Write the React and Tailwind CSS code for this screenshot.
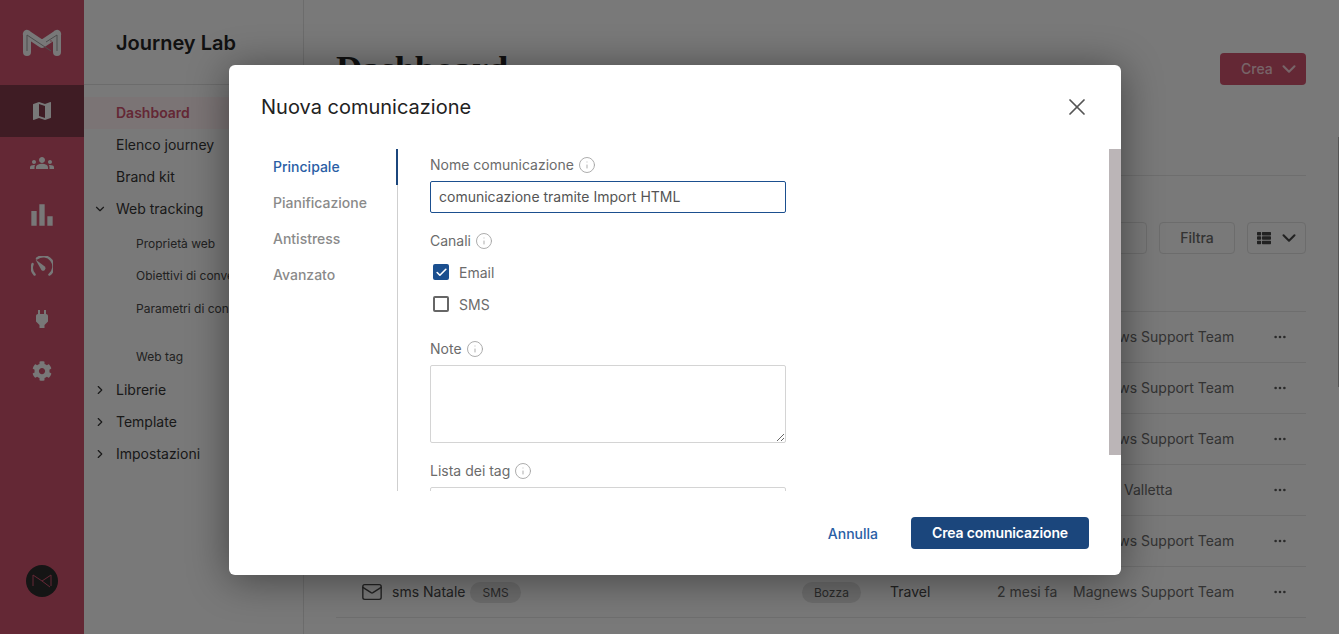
import React from "react";
import { ChevronDown, ChevronRight, Info, Mail, X, Check } from "lucide-react";
import { BsThreeDots } from "react-icons/bs";
import { FaCog, FaThList } from "react-icons/fa";
import { MdBarChart, MdGroups, MdMap, MdPower } from "react-icons/md";

const rows = [
  { author: "Magnews Support Team" },
  { author: "Magnews Support Team" },
  { author: "Magnews Support Team" },
  { author: "Valletta", offset: true },
  { author: "Magnews Support Team" },
  { name: "sms Natale", tag: "SMS", status: "Bozza", brand: "Travel", date: "2 mesi fa", author: "Magnews Support Team" },
];

function Logo() {
  return (
    <svg width="40" height="28" viewBox="0 0 40 28" fill="none">
      <path d="M5 5 L5 23 M5 5 L20 15 L35 5 M35 5 L35 23" stroke="#f0f0f0" strokeWidth="8" strokeLinecap="round" strokeLinejoin="round" />
      <path d="M5 6 L5 22 M5 6 L20 16 M35 6 L35 22 M35 6 L24 13 M20 16 L29 22" stroke="#999" strokeWidth="1" />
      <circle cx="29" cy="12" r="0.7" fill="#c9506b" />
    </svg>
  );
}

function Gauge() {
  return (
    <svg width="22" height="22" viewBox="0 0 22 22" fill="none">
      <path d="M3.6 18.6 A10 10 0 0 1 1.6 8" stroke="#f0f0f0" strokeWidth="2.4" strokeLinecap="round" />
      <path d="M6 2.4 A10 10 0 1 1 18.4 18.6" stroke="#f0f0f0" strokeWidth="2.4" strokeLinecap="round" />
      <path d="M4.5 3.5 L13.8 10.6 A2.4 2.4 0 0 1 10.4 14 Z" fill="#f0f0f0" />
    </svg>
  );
}

function Rail() {
  const color = "text-[#f0f0f0]";
  const icons = [
    <MdGroups size={24} className={color} />,
    <MdBarChart size={32} className={color} />,
    <Gauge />,
    <MdPower size={24} className={color} />,
    <FaCog size={20} className={color} />,
  ];
  return (
    <aside className="flex w-[84px] shrink-0 flex-col items-center bg-[#c9506b]">
      <div className="flex h-[85px] w-full items-center justify-center">
        <Logo />
      </div>
      <div className="flex h-[52px] w-full items-center justify-center bg-[#7e3848]">
        <MdMap size={24} className={color} />
      </div>
      {icons.map((icon, i) => (
        <div key={i} className="flex h-[52px] w-full items-center justify-center">
          {icon}
        </div>
      ))}
      <div className="mt-auto mb-[37px] flex size-8 items-center justify-center rounded-full bg-[#2a2a2a]">
        <svg width="22" height="16" viewBox="0 0 22 16" fill="none">
          <path d="M2 13 L2 2 L11 8 L20 2 L20 13 M11 8 L19 14" stroke="#c9506b" strokeWidth="1" />
        </svg>
      </div>
    </aside>
  );
}

function Sidebar() {
  const top = "flex h-8 items-center pl-[32px] text-sm text-[#333]";
  const sub = "flex h-8 items-center pl-[52px] text-xs text-[#444]";
  return (
    <aside className="w-[220px] shrink-0 border-r border-[#d8d8d8]">
      <div className="flex h-[85px] items-center border-b border-[#d8d8d8] pl-[32px] pt-[2px] text-xl font-semibold text-[#222]">
        Journey Lab
      </div>
      <nav className="pt-3">
        <div className="flex h-8 items-center bg-[#f6e8eb] pl-[32px] text-sm font-semibold text-[#c9506b]">Dashboard</div>
        <div className={top}>Elenco journey</div>
        <div className={top}>Brand kit</div>
        <div className="relative">
          <ChevronDown size={14} strokeWidth={2} className="absolute left-[9px] top-[9px] text-[#333]" />
          <div className={top}>Web tracking</div>
        </div>
        <div className="mt-[3px]">
          <div className={sub}>Proprietà web</div>
          <div className={sub}>Obiettivi di conversione</div>
          <div className={`${sub} h-[33px]`}>Parametri di conversione</div>
          <div className={`${sub} mt-4`}>Web tag</div>
        </div>
        <div className="mt-[1px]">
          {["Librerie", "Template", "Impostazioni"].map((t) => (
            <div key={t} className="relative">
              <ChevronRight size={14} strokeWidth={2} className="absolute left-[9px] top-[9px] text-[#333]" />
              <div className={top}>{t}</div>
            </div>
          ))}
        </div>
      </nav>
    </aside>
  );
}

function Pill({ children }) {
  return <span className="rounded-full bg-[#d8d8d8] px-3 py-[3px] text-xs text-[#555]">{children}</span>;
}

function Main() {
  return (
    <main className="flex min-w-0 flex-1 flex-col pl-[32px] pr-[33px]">
      <div className="flex h-[137px] shrink-0 items-start justify-between pt-[53px]">
        <h1 className="text-[36.5px] leading-[32px] font-bold text-[#222]" style={{ fontFamily: '"Liberation Serif", serif' }}>Dashboard</h1>
        <button className="flex h-8 w-[86px] items-center gap-[5px] rounded bg-[#c9506b] pl-[21px] text-sm font-medium text-white/70">
          Crea <ChevronDown size={22} strokeWidth={2.25} />
        </button>
      </div>
      <div className="h-[39px] shrink-0 border-b border-[#dcdcdc]" />
      <div className="flex h-[136px] shrink-0 items-start justify-end gap-3 border-b border-[#dcdcdc] pt-[46px]">
        <div className="h-8 w-[160px] rounded border border-[#d8d8d8]" />
        <button className="flex h-8 w-[76px] items-center justify-center rounded border border-[#d8d8d8] text-sm font-medium text-[#666]">Filtra</button>
        <button className="flex h-8 w-[59px] items-center gap-[7px] rounded border border-[#d8d8d8] pl-[9px] text-[#444]">
          <FaThList size={14} />
          <ChevronDown size={22} strokeWidth={2.25} />
        </button>
      </div>
      {rows.map((r, i) => (
        <div key={i} className="flex h-[51px] shrink-0 items-center border-b border-[#dcdcdc] text-sm text-[#666]">
          <div className="flex w-[466px] items-center gap-[9px] pl-[25px]">
            {r.name && (
              <>
                <Mail size={22} strokeWidth={1.5} className="text-[#444]" />
                <span className="text-[#444]">{r.name}</span>
                <span className="-ml-[4px]"><Pill>{r.tag}</Pill></span>
              </>
            )}
          </div>
          <div className="w-[88px]">{r.status && <Pill>{r.status}</Pill>}</div>
          <div className="w-[107px] text-[#444]">{r.brand}</div>
          <div className="w-[76px]">{r.date}</div>
          <div className={`w-[200px] ${r.offset ? "pl-[51px]" : ""}`}>{r.author}</div>
          <BsThreeDots size={14} className="text-[#555]" />
        </div>
      ))}
      <div className="flex h-[51px] shrink-0 items-center">
        <div className="w-[134px] shrink-0" />
        <div className="h-5 w-[50px] shrink-0 rounded-full bg-[#d8d8d8]" />
        <div className="w-[282px] shrink-0" />
        <div className="h-5 w-[60px] shrink-0 rounded-full bg-[#d8d8d8]" />
      </div>
    </main>
  );
}

function Label({ children }) {
  return (
    <div className="flex h-4 items-center gap-[4px] text-sm text-[#6b6b6b]">
      {children}
      <Info size={18} strokeWidth={1.25} className="text-[#a8a8a8]" />
    </div>
  );
}

function Modal() {
  return (
    <div className="absolute left-[229px] top-[65px] flex h-[510px] w-[892px] flex-col rounded-md bg-white shadow-[0_4px_40px_rgba(0,0,0,0.45)]">
      <div className="flex h-[84px] shrink-0 items-center justify-between pl-8 pr-[30px]">
        <h2 className="text-xl text-[#222]">Nuova comunicazione</h2>
        <X size={28} strokeWidth={1.5} className="text-[#555]" />
      </div>
      <div className="flex h-[342px] shrink-0">
        <div className="relative w-[169px] shrink-0 border-r border-[#cfcfcf] pl-[44px] text-sm font-medium text-[#8a8a8a]">
          <div className="absolute -right-px top-0 h-9 w-[2px] bg-[#1b467c]" />
          <div className="flex h-9 items-center text-[#2a5ea5]">Principale</div>
          <div className="flex h-9 items-center">Pianificazione</div>
          <div className="flex h-9 items-center">Antistress</div>
          <div className="flex h-9 items-center">Avanzato</div>
        </div>
        <div className="min-w-0 flex-1 overflow-hidden pl-8 pt-2">
          <Label>Nome comunicazione</Label>
          <input
            readOnly
            value="comunicazione tramite Import HTML"
            className="mt-2 h-8 w-[356px] rounded-[2px] border border-[#1b4f8f] px-2 pb-px text-sm text-[#555] outline-none"
          />
          <div className="mt-5">
            <Label>Canali</Label>
          </div>
          <div className="mt-[8px] flex h-8 items-center gap-[10px] pl-[3px] text-sm text-[#6b6b6b]">
            <span className="mb-[2px] flex size-4 items-center justify-center rounded-[2px] bg-[#1b4f8f]">
              <Check size={13} strokeWidth={3} className="text-white" />
            </span>
            Email
          </div>
          <div className="flex h-8 items-center gap-[10px] pl-[3px] text-sm text-[#6b6b6b]">
            <span className="mb-[2px] size-4 rounded-[2px] border-2 border-[#666]" />
            SMS
          </div>
          <div className="mt-5">
            <Label>Note</Label>
          </div>
          <textarea
            readOnly
            className="mt-2 block h-[78px] w-[356px] rounded-[2px] border border-[#d4d4d4] outline-none"
          />
          <div className="mt-5">
            <Label>Lista dei tag</Label>
          </div>
          <div className="mt-2 h-8 w-[356px] rounded-[2px] border border-[#d4d4d4]" />
        </div>
        <div className="flex w-3 shrink-0 flex-col">
          <div className="h-[306px] bg-[#bbb5b7]" />
        </div>
      </div>
      <div className="flex flex-1 items-start justify-end gap-[33px] pr-8 pt-[26px]">
        <button className="mt-[7px] text-sm font-medium text-[#2a5ea5]">Annulla</button>
        <button className="h-8 w-[178px] rounded bg-[#1b467c] text-sm font-semibold tracking-[-0.17px] text-white">Crea comunicazione</button>
      </div>
    </div>
  );
}

export default function App() {
  return (
    <div className="relative flex h-[634px] w-full overflow-hidden bg-[#f2f2f2]" style={{ fontFamily: 'Inter, "Noto Sans", sans-serif' }}>
      <Rail />
      <Sidebar />
      <Main />
      <div className="absolute inset-0 bg-black/50" />
      <div className="absolute right-0 top-[137px] h-[250px] w-px bg-[#555]" />
      <Modal />
    </div>
  );
}
